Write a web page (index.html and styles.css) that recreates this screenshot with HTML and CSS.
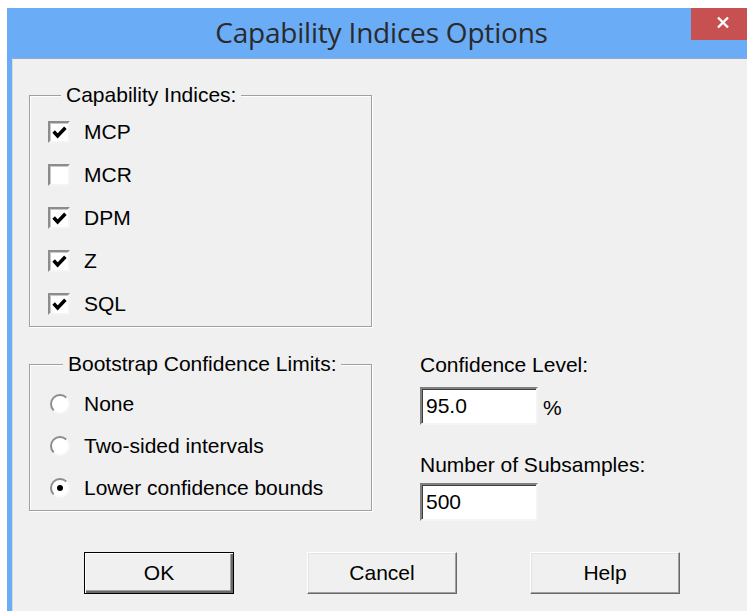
FILE: index.html
```html
<!DOCTYPE html>
<html lang="en">
<head>
<meta charset="utf-8">
<title>Capability Indices Options</title>
<link rel="stylesheet" href="styles.css">
</head>
<body>
<div class="window">
  <div class="titlebar">
    <div class="title">Capability Indices Options</div>
    <button class="close" type="button" aria-label="Close">
      <svg width="14" height="13" viewBox="0 0 14 13"><path d="M2 1.5 L12 11.5 M12 1.5 L2 11.5" stroke="#fff" stroke-width="2.4" fill="none"/></svg>
    </button>
  </div>
  <div class="client">
    <fieldset class="group group-indices">
      <legend>Capability Indices:</legend>
      <div class="row"><span class="check"><svg viewBox="0 0 12 12"><path d="M1.3 5.2 L4.5 8.8 L10.7 2.2" stroke="#000" stroke-width="2.8" fill="none"/></svg></span>MCP</div>
      <div class="row"><span class="check"></span>MCR</div>
      <div class="row"><span class="check"><svg viewBox="0 0 12 12"><path d="M1.3 5.2 L4.5 8.8 L10.7 2.2" stroke="#000" stroke-width="2.8" fill="none"/></svg></span>DPM</div>
      <div class="row"><span class="check"><svg viewBox="0 0 12 12"><path d="M1.3 5.2 L4.5 8.8 L10.7 2.2" stroke="#000" stroke-width="2.8" fill="none"/></svg></span>Z</div>
      <div class="row"><span class="check"><svg viewBox="0 0 12 12"><path d="M1.3 5.2 L4.5 8.8 L10.7 2.2" stroke="#000" stroke-width="2.8" fill="none"/></svg></span>SQL</div>
    </fieldset>

    <div class="lower">
      <fieldset class="group group-boot">
        <legend>Bootstrap Confidence Limits:</legend>
        <div class="row radio-row"><span class="radio"></span>None</div>
        <div class="row radio-row"><span class="radio"></span>Two-sided intervals</div>
        <div class="row radio-row"><span class="radio selected"></span>Lower confidence bounds</div>
      </fieldset>
      <div class="fields">
        <div class="field-label">Confidence Level:</div>
        <div class="field-line">
          <div class="edit">95.0</div><span class="unit">%</span>
        </div>
        <div class="field-label second">Number of Subsamples:</div>
        <div class="field-line tight">
          <div class="edit">500</div>
        </div>
      </div>
    </div>

    <div class="buttons">
      <button class="btn default" type="button">OK</button>
      <button class="btn" type="button">Cancel</button>
      <button class="btn" type="button">Help</button>
    </div>
  </div>
</div>
</body>
</html>
```

FILE: styles.css
```css
html, body {
  margin: 0;
  padding: 0;
  background: #ffffff;
  overflow: hidden;
}

.window {
  margin: 8px 0 0 7px;
  padding-left: 5px;
  height: 620px;
  background: #6aacf6;
  display: flex;
  flex-direction: column;
}

/* caption bar: title centred over the whole width, close box at the end */
.titlebar {
  height: 50px;
  display: grid;
  flex: none;
}

.title {
  grid-area: 1 / 1;
  justify-self: center;
  align-self: center;
  margin-left: 4px;
  margin-bottom: 2px;
  font-family: "Open Sans", "Noto Sans", sans-serif;
  font-size: 28px;
  color: #2a2a2a;
  letter-spacing: -0.2px;
}

.close {
  grid-area: 1 / 1;
  justify-self: end;
  align-self: start;
  width: 56px;
  height: 32px;
  border: none;
  padding: 0 0 0 25px;
  margin: 0;
  background: #c75050;
  display: flex;
  align-items: center;
  justify-content: flex-start;
}

.close svg {
  display: block;
  margin-top: -3px;
}

/* dialog body */
.client {
  flex: 1;
  background: #f0f0f0;
  border-top: 1px solid #8fa9cc;
  border-left: 1px solid #dadada;
  padding: 24px 0 0 16px;
  font-family: "Liberation Sans", Arial, sans-serif;
  font-size: 21px;
  line-height: 24px;
  color: #000;
}

.group {
  margin: 0;
  padding: 0;
  width: 343px;
  box-sizing: border-box;
  border: 1px solid #a0a0a0;
  box-shadow: 1px 1px 0 #ffffff, inset 1px 1px 0 #ffffff;
  min-inline-size: 0;
}

.group legend {
  margin-left: 13px;
  padding: 0 5px;
  line-height: 24px;
  background: #f0f0f0;
}

.group-indices {
  padding: 3px 0 1px 18px;
}

.group-boot {
  padding: 7px 0 1px 20px;
}

.row {
  height: 43px;
  display: flex;
  align-items: center;
  gap: 14px;
  white-space: nowrap;
}

.radio-row {
  height: 42px;
}

/* sunken check box */
.check {
  width: 22px;
  height: 22px;
  box-sizing: border-box;
  background: #ffffff;
  border: 2px solid;
  border-color: #8c8c8c #f4f4f4 #f4f4f4 #8c8c8c;
  box-shadow: inset 1px 1px 0 #c8c8c8;
  display: flex;
  align-items: center;
  justify-content: center;
  flex: none;
}

.check svg {
  width: 15px;
  height: 15px;
  display: block;
  margin: 1px 0 0 1px;
}

/* sunken option button */
.radio {
  width: 20px;
  height: 20px;
  box-sizing: border-box;
  border-radius: 50%;
  background: #ffffff;
  border: 2px solid;
  border-color: #8c8c8c #f8f8f8 #f8f8f8 #8c8c8c;
  display: flex;
  align-items: center;
  justify-content: center;
  flex: none;
}

.radio.selected::after {
  content: "";
  width: 6px;
  height: 6px;
  border-radius: 50%;
  background: #000;
}

.lower {
  display: flex;
  align-items: flex-start;
  margin-top: 25px;
}

.fields {
  margin-left: 48px;
  padding-top: 1px;
}

.field-label {
  height: 24px;
  white-space: nowrap;
}

.field-label.second {
  margin-top: 28px;
}

.field-line {
  margin-top: 10px;
  display: flex;
  align-items: center;
}

.field-line.tight {
  margin-top: 6px;
}

.edit {
  width: 118px;
  height: 38px;
  box-sizing: border-box;
  background: #ffffff;
  border: 2px solid;
  border-color: #808080 #f4f4f4 #f4f4f4 #808080;
  box-shadow: inset 1px 1px 0 #404040;
  padding: 0 0 0 4px;
  display: flex;
  align-items: center;
}

.unit {
  margin-left: 5px;
  margin-top: 4px;
}

.buttons {
  display: flex;
  gap: 73px;
  margin: 31px 0 0 55px;
}

.btn {
  width: 150px;
  height: 42px;
  box-sizing: border-box;
  margin: 0;
  padding: 0;
  font-family: "Liberation Sans", Arial, sans-serif;
  font-size: 21px;
  color: #000;
  background: #f0f0f0;
  border: 1px solid;
  border-color: #ffffff #696969 #696969 #ffffff;
  box-shadow: inset -1px -1px 0 #a0a0a0, inset 1px 1px 0 #e3e3e3;
}

.btn.default {
  border: 1px solid #000;
  box-shadow: inset 1px 1px 0 #ffffff, inset -2px -2px 0 #696969, inset -3px -3px 0 #a0a0a0;
}
```
